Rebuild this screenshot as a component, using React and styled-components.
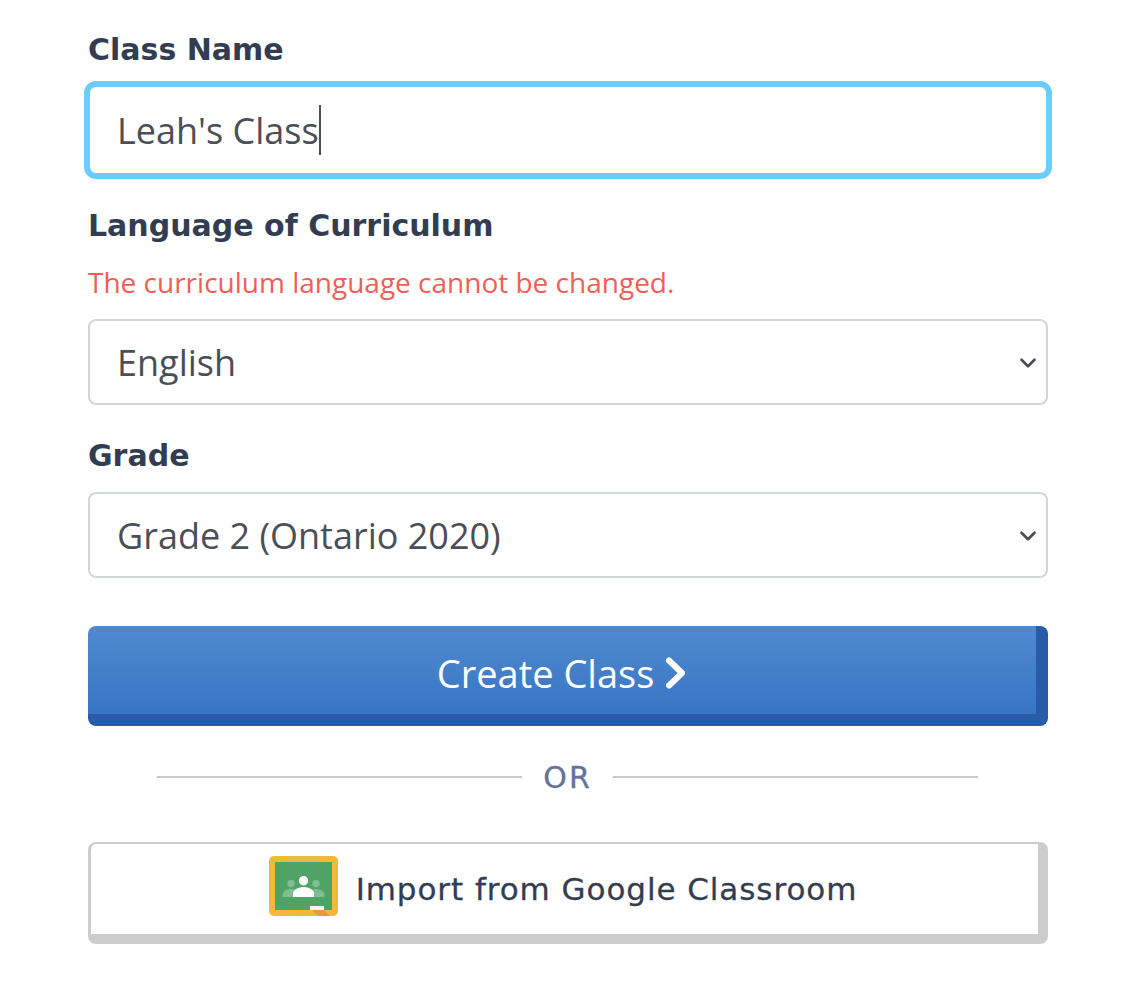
import React from "react";
import styled, { createGlobalStyle } from "styled-components";
import { ChevronDown } from "lucide-react";

const Global = createGlobalStyle`
  html, body { margin: 0; padding: 0; background: #fff; }
`;

const Form = styled.form`
  width: 960px;
  margin-left: 88px;
  padding-top: 33px;
  display: flex;
  flex-direction: column;
  font-family: "Open Sans", sans-serif;
`;

const Label = styled.label`
  display: block;
  font-family: "DejaVu Sans", sans-serif;
  font-weight: 700;
  font-size: 30px;
  line-height: 34px;
  color: #333d51;
  margin-top: ${p => p.$top || "0"};
`;

const FocusedInput = styled.div`
  box-sizing: border-box;
  width: 968px;
  height: 98px;
  margin: 14px 0 0 -4px;
  padding: 0 0 0 27px;
  display: flex;
  align-items: center;
  border: 6px solid #6ccdfd;
  border-radius: 12px;
  background: #fff;
  font-size: 36px;
  color: #4a4f57;
`;

const Caret = styled.span`
  width: 2px;
  height: 50px;
  background: #4a4f57;
`;

const Hint = styled.p`
  margin: 20px 0 0;
  font-size: 28px;
  line-height: 38px;
  color: #ef5f57;
`;

const SelectWrap = styled.div`
  position: relative;
  margin-top: ${p => p.$top};
`;

const Select = styled.select`
  display: block;
  box-sizing: border-box;
  width: 100%;
  height: 86px;
  padding: 0 60px 0 27px;
  appearance: none;
  border: 2px solid #d2d6da;
  border-radius: 8px;
  background: #fff;
  font-family: inherit;
  font-size: 36px;
  color: #4a4f57;
`;

const Chevron = styled(ChevronDown)`
  position: absolute;
  right: 7px;
  top: 31px;
  width: 26px;
  height: 26px;
  color: #4a4f57;
  pointer-events: none;
`;

const CreateButton = styled.button`
  box-sizing: content-box;
  height: 82px;
  margin-top: 48px;
  padding: 6px 0 0;
  display: flex;
  align-items: center;
  justify-content: center;
  gap: 11px;
  border-style: solid;
  border-color: #285ca9;
  border-width: 0 12px 12px 0;
  border-radius: 8px;
  background: linear-gradient(#5089cf, #3875c4) padding-box;
  font-family: inherit;
  font-size: 38px;
  color: #fff;
`;

const Divider = styled.div`
  display: flex;
  align-items: center;
  gap: 21px;
  margin: 30px 70px 0 69px;
  height: 42px;
`;

const Rule = styled.span`
  flex: 1;
  height: 2px;
  background: #cacaca;
`;

const Or = styled.span`
  font-family: "DejaVu Sans", sans-serif;
  font-size: 30px;
  letter-spacing: 2px;
  -webkit-text-stroke: 0.3px #64739a;
  color: #64739a;
`;

const ImportButton = styled.button`
  box-sizing: border-box;
  height: 102px;
  margin-top: 44px;
  padding: 1px 3px 2px 0;
  display: flex;
  align-items: center;
  justify-content: center;
  gap: 18px;
  background: #fff;
  border-style: solid;
  border-color: #cccccc;
  border-width: 2px 10px 10px 3px;
  border-radius: 8px;
  font-family: "DejaVu Sans", sans-serif;
  font-size: 31px;
  letter-spacing: 0.93px;
  -webkit-text-stroke: 0.3px #333d51;
  color: #333d51;
`;

const ClassroomSvg = styled.svg`
  flex: none;
  margin-bottom: 6px;
`;

const ClassroomIcon = () => (
  <ClassroomSvg width="69" height="60" viewBox="0 0 69 60" aria-hidden="true">
    <rect width="69" height="60" rx="5" fill="#f0b93a" />
    <rect x="6" y="6" width="57" height="48" fill="#4ea365" />
    <path d="M43 54 L55 54 L61 60 L49 60 Z" fill="#e29c3a" />
    <rect x="41" y="50" width="14" height="4" fill="#f4f4f4" />
    <g fill="#7fbd92">
      <circle cx="22" cy="27.500" r="3.700" />
      <circle cx="47" cy="27.500" r="3.700" />
      <path d="M13.500 41 L13.500 39 C13.500 35 18 33 22 33 C26 33 30 35 30 39 L30 41 Z" />
      <path d="M39 41 L39 39 C39 35 43 33 47 33 C51 33 55.500 35 55.500 39 L55.500 41 Z" />
    </g>
    <circle cx="34.500" cy="24.700" r="4.700" fill="#fff" />
    <path d="M24 41 L24 38 C24 33 30 31 34.500 31 C39 31 45 33 45 38 L45 41 Z" fill="#fff" />
  </ClassroomSvg>
);

const Arrow = () => (
  <svg width="22" height="34" viewBox="0 0 22 34" aria-hidden="true">
    <path d="M4 4.500 L17 17 L4 29.500" fill="none" stroke="#fff" strokeWidth="6" strokeLinecap="round" strokeLinejoin="round" />
  </svg>
);

export default function App() {
  return (
    <>
      <Global />
      <Form onSubmit={e => e.preventDefault()}>
        <Label>Class Name</Label>
        <FocusedInput>
          Leah's Class
          <Caret />
        </FocusedInput>
        <Label $top="30px">Language of Curriculum</Label>
        <Hint>The curriculum language cannot be changed.</Hint>
        <SelectWrap $top="18px">
          <Select defaultValue="English">
            <option>English</option>
          </Select>
          <Chevron strokeWidth={2.5} />
        </SelectWrap>
        <Label $top="34px">Grade</Label>
        <SelectWrap $top="19px">
          <Select defaultValue="Grade 2 (Ontario 2020)">
            <option>Grade 2 (Ontario 2020)</option>
          </Select>
          <Chevron strokeWidth={2.5} />
        </SelectWrap>
        <CreateButton type="submit">
          Create Class
          <Arrow />
        </CreateButton>
        <Divider>
          <Rule />
          <Or>OR</Or>
          <Rule />
        </Divider>
        <ImportButton type="button">
          <ClassroomIcon />
          Import from Google Classroom
        </ImportButton>
      </Form>
    </>
  );
}
